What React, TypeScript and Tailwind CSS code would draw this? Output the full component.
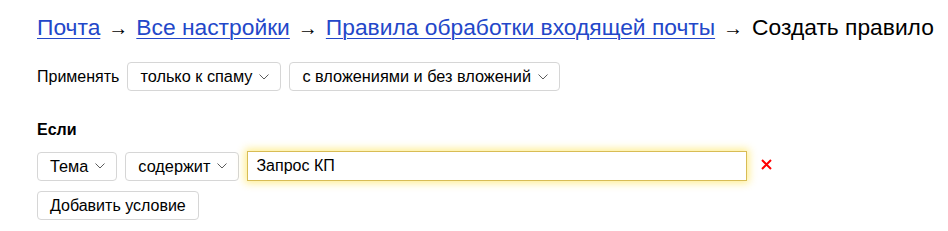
import React from "react";

function Chevron() {
  return (
    <svg width="10" height="6" viewBox="0 0 10 6" fill="none" className="ml-[7px] shrink-0">
      <path d="M0.5 0.5 L5 5 L9.5 0.5" stroke="#5c5c5c" strokeWidth="1" />
    </svg>
  );
}

function Select({ label }: { label: string }) {
  return (
    <button className="flex h-[29px] items-center whitespace-nowrap rounded-[4px] border border-[#d6d6d6] bg-white pl-3 pr-[11px] text-[16.3px] text-black">
      {label}
      <Chevron />
    </button>
  );
}

function Arrow({ last }: { last?: boolean }) {
  return <span className={last ? "ml-[8px] mr-[9px] text-[20px]" : "mx-[8px] text-[20px]"}>→</span>;
}

export default function App() {
  return (
    <div className="min-h-[231px] overflow-hidden bg-white pl-[37px] pt-[13px] font-['Liberation_Sans',Arial,sans-serif] text-black">
      {/* breadcrumbs */}
      <div className="flex items-baseline whitespace-nowrap text-[22.8px] leading-[28px]">
        <a className="text-[#2347c9] underline decoration-1 underline-offset-[3px]">Почта</a>
        <Arrow />
        <a className="text-[#2347c9] underline decoration-1 underline-offset-[3px]">Все настройки</a>
        <Arrow />
        <a className="text-[#2347c9] underline decoration-1 underline-offset-[3px]">Правила обработки входящей почты</a>
        <Arrow last />
        <span>Создать правило</span>
      </div>

      {/* apply row */}
      <div className="mt-[20px] flex items-center gap-2 text-[16px]">
        <span>Применять</span>
        <Select label="только к спаму" />
        <Select label="с вложениями и без вложений" />
      </div>

      <div className="mt-[30px] text-[16px] font-bold leading-[18px]">Если</div>

      {/* condition row */}
      <div className="mt-[12px] flex items-center gap-2">
        <Select label="Тема" />
        <Select label="содержит" />
        <div className="flex h-[30px] w-[500px] items-center border border-[#d8bc55] bg-white pl-2 text-[16px] shadow-[0_0_8px_2px_rgba(255,214,0,0.45)]">
          Запрос КП
        </div>
        <svg width="11" height="11" viewBox="0 0 11 11" className="ml-[6px] -mt-[4px]">
          <path d="M1 1 L10 10 M10 1 L1 10" stroke="#ff0000" strokeWidth="2" />
        </svg>
      </div>

      <div className="mt-[10px]">
        <button className="flex h-[29px] items-center rounded-[4px] border border-[#d6d6d6] bg-white px-3 text-[16px]">
          Добавить условие
        </button>
      </div>
    </div>
  );
}
